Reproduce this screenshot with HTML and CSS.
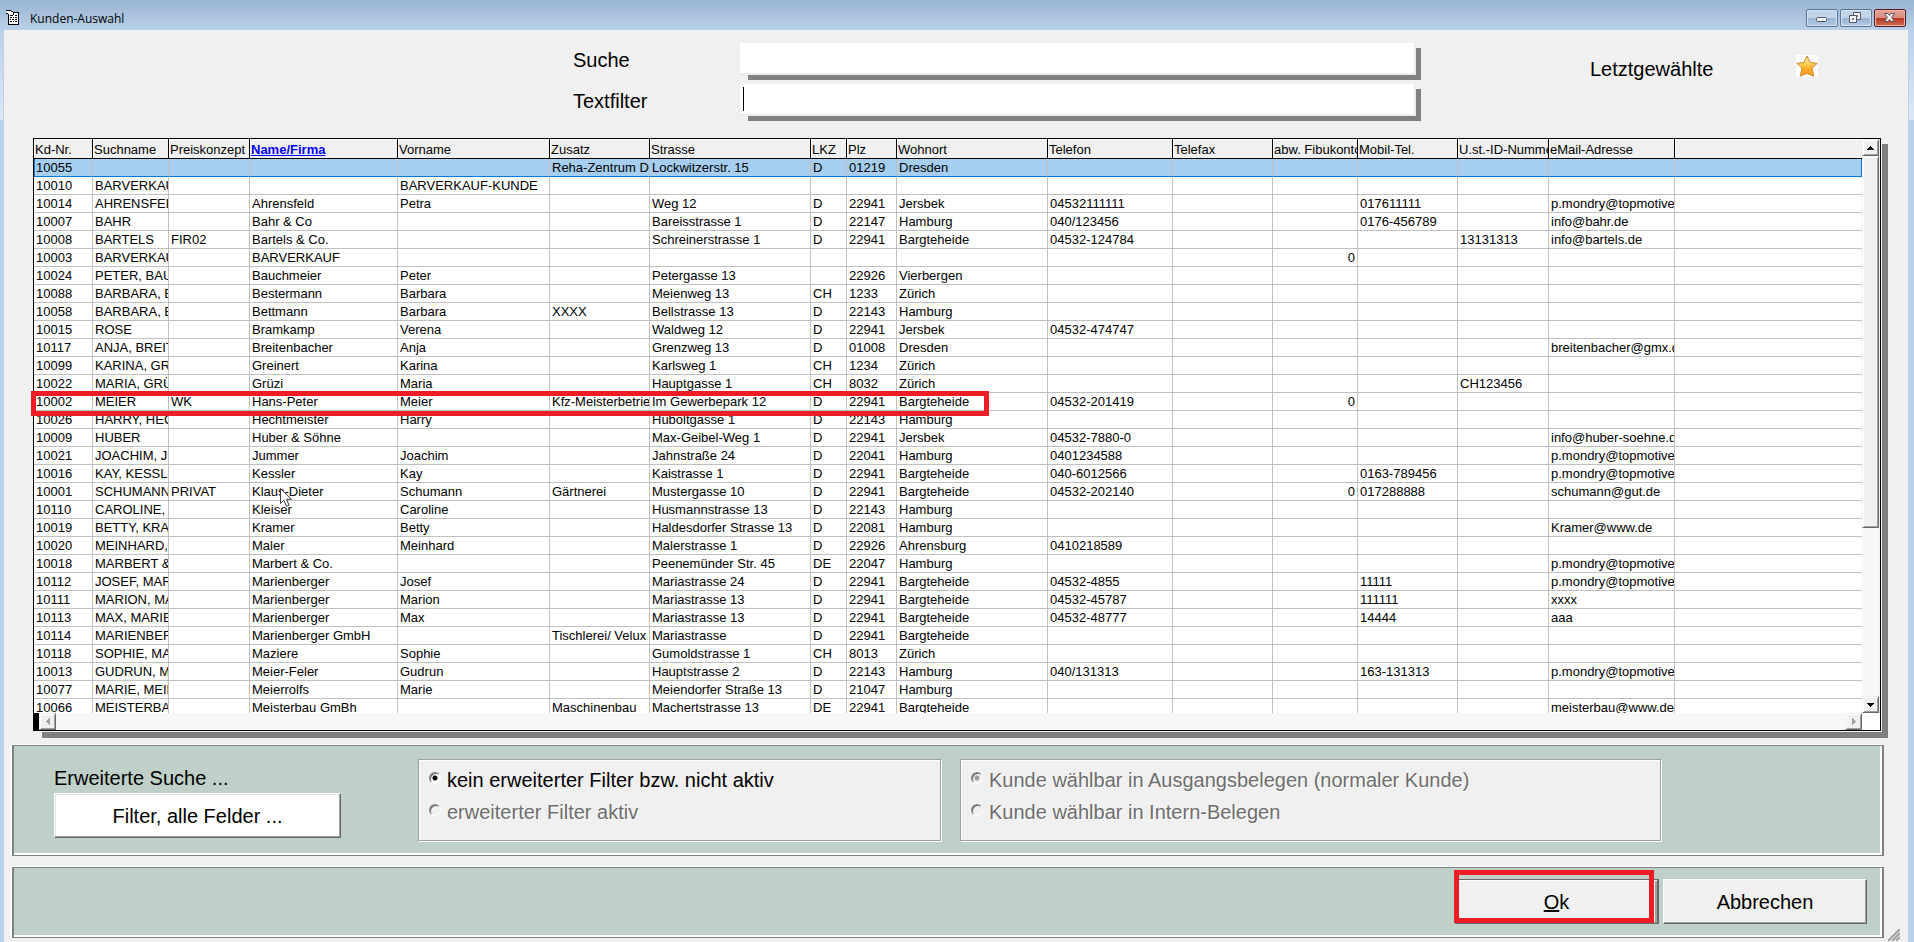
FILE: index.html
```html
<!DOCTYPE html>
<html lang="de">
<head>
<meta charset="utf-8">
<title>Kunden-Auswahl</title>
<link rel="stylesheet" href="styles.css">
</head>
<body>
<div class="window">
  <header class="titlebar">
    <svg class="app-icon" width="14" height="17" viewBox="0 0 14 17" shape-rendering="crispEdges" aria-hidden="true">
      <path d="M2 3h11v13H2z" fill="#fff"/>
      <path d="M12 3h1v13h-1zM2 15h11v1H2zM2 6h1v9H2zM8 3h5v1H8z" fill="#000"/>
      <path d="M0 1h5v1H0zM5 2h2v1H5zM7 3h1v3H7zM0 4h2v1H0zM2 5h2v1H2zM4 6h3v1H4z" fill="#000"/>
      <path d="M0 2h5v1H0zM1 3h6v1H1zM3 4h4v2H3z" fill="#fff"/>
      <path d="M9 6h2v1H9zM4 8h2v1H4zM7 8h1v1H7zM9 8h2v1H9zM4 10h1v1H4zM6 10h2v1H6zM9 10h2v1H9zM4 12h2v1H4zM7 12h1v1H7zM9 12h2v1H9z" fill="#000"/>
    </svg>
    <h1 class="title">Kunden-Auswahl</h1>
    <div class="window-buttons">
      <button class="win-btn" type="button" aria-label="Minimieren">
        <svg width="28" height="14" viewBox="0 0 28 14"><rect x="8.500" y="6.500" width="10" height="4" rx="1" fill="#f4f4f4" stroke="#535666"/></svg>
      </button>
      <button class="win-btn" type="button" aria-label="Wiederherstellen">
        <svg width="28" height="14" viewBox="0 0 28 14"><g fill="#f4f4f4" stroke="#535666"><path d="M11.500 1.500h7v7h-7z"/><path d="M14.500 4.500h1v1h-1z" fill="#8fa9c8"/><path d="M7.500 4.500h7v7h-7z"/><path d="M10.500 7.500h1v1h-1z" fill="#8fa9c8"/></g></svg>
      </button>
      <button class="win-btn win-close" type="button" aria-label="Schließen">
        <svg width="28" height="14" viewBox="0 0 28 14"><path d="M8.500 2.500h3.500l1.500 2 1.500-2h3.500l-3 4 3 4H15l-1.500-2-1.500 2H8.500l3-4z" fill="#f4f4f4" stroke="#535666"/></svg>
      </button>
    </div>
  </header>

  <main class="client">
    <form class="search">
      <label class="search-label" for="suche">Suche</label>
      <div class="field"><input class="text-input" id="suche" type="text"></div>
      <label class="search-label" for="textfilter">Textfilter</label>
      <div class="field"><input class="text-input text-input-active" id="textfilter" type="text"></div>
      <div class="recent">
        <span class="recent-label">Letztgewählte</span>
        <button class="star" type="button" aria-label="Letztgewählte anzeigen">
          <svg width="22" height="22" viewBox="0 0 22 22" aria-hidden="true">
            <defs><linearGradient id="gold" x1="0" y1="0" x2="0" y2="1"><stop offset="0" stop-color="#fff2b0"/><stop offset=".4" stop-color="#ffd056"/><stop offset=".6" stop-color="#ffb02e"/><stop offset="1" stop-color="#ff9a1e"/></linearGradient></defs>
            <path d="M11 1l3 6.500 7.300.8-5.300 5 1.800 7.900L11 18.500l-6.800 2.700L6 13.300.7 8.300 8 7.500z" fill="url(#gold)" stroke="#c9892c" stroke-linejoin="round"/>
          </svg>
        </button>
      </div>
    </form>

    <section class="grid-shadow">
      <div class="grid">
        <div class="rows">
          <table class="customers">
            <colgroup><col class="w-nr"><col class="w-such"><col class="w-preis"><col class="w-name"><col class="w-vor"><col class="w-100"><col class="w-str"><col class="w-lkz"><col class="w-plz"><col class="w-ort"><col class="w-tel"><col class="w-100"><col class="w-fibu"><col class="w-100"><col class="w-ust"><col class="w-mail"><col></colgroup>
            <thead>
              <tr><th>Kd-Nr.<th>Suchname<th>Preiskonzept<th><a class="sorted" href="#name">Name/Firma</a><th>Vorname<th>Zusatz<th>Strasse<th>LKZ<th>Plz<th>Wohnort<th>Telefon<th>Telefax<th>abw. Fibukonto<th>Mobil-Tel.<th>U.st.-ID-Nummer<th>eMail-Adresse<th></tr>
            </thead>
            <tbody>
              <tr class="selected"><td>10055<td><td><td><td><td>Reha-Zentrum De<td>Lockwitzerstr. 15<td>D<td>01219<td>Dresden<td><td><td><td><td><td><td></tr>
              <tr><td>10010<td>BARVERKAUF<td><td><td>BARVERKAUF-KUNDE<td><td><td><td><td><td><td><td><td><td><td><td></tr>
              <tr><td>10014<td>AHRENSFELD<td><td>Ahrensfeld<td>Petra<td><td>Weg 12<td>D<td>22941<td>Jersbek<td>04532111111<td><td><td>017611111<td><td>p.mondry@topmotive<td></tr>
              <tr><td>10007<td>BAHR<td><td>Bahr &amp; Co<td><td><td>Bareisstrasse 1<td>D<td>22147<td>Hamburg<td>040/123456<td><td><td>0176-456789<td><td>info@bahr.de<td></tr>
              <tr><td>10008<td>BARTELS<td>FIR02<td>Bartels &amp; Co.<td><td><td>Schreinerstrasse 1<td>D<td>22941<td>Bargteheide<td>04532-124784<td><td><td><td>13131313<td>info@bartels.de<td></tr>
              <tr><td>10003<td>BARVERKAUF<td><td>BARVERKAUF<td><td><td><td><td><td><td><td><td>0<td><td><td><td></tr>
              <tr><td>10024<td>PETER, BAUCHMEIER<td><td>Bauchmeier<td>Peter<td><td>Petergasse 13<td><td>22926<td>Vierbergen<td><td><td><td><td><td><td></tr>
              <tr><td>10088<td>BARBARA, BESTERMANN<td><td>Bestermann<td>Barbara<td><td>Meienweg 13<td>CH<td>1233<td>Zürich<td><td><td><td><td><td><td></tr>
              <tr><td>10058<td>BARBARA, BETTMANN<td><td>Bettmann<td>Barbara<td>XXXX<td>Bellstrasse 13<td>D<td>22143<td>Hamburg<td><td><td><td><td><td><td></tr>
              <tr><td>10015<td>ROSE<td><td>Bramkamp<td>Verena<td><td>Waldweg 12<td>D<td>22941<td>Jersbek<td>04532-474747<td><td><td><td><td><td></tr>
              <tr><td>10117<td>ANJA, BREITENBACHER<td><td>Breitenbacher<td>Anja<td><td>Grenzweg 13<td>D<td>01008<td>Dresden<td><td><td><td><td><td>breitenbacher@gmx.de<td></tr>
              <tr><td>10099<td>KARINA, GREINERT<td><td>Greinert<td>Karina<td><td>Karlsweg 1<td>CH<td>1234<td>Zürich<td><td><td><td><td><td><td></tr>
              <tr><td>10022<td>MARIA, GRÜZI<td><td>Grüzi<td>Maria<td><td>Hauptgasse 1<td>CH<td>8032<td>Zürich<td><td><td><td><td>CH123456<td><td></tr>
              <tr><td>10002<td>MEIER<td>WK<td>Hans-Peter<td>Meier<td>Kfz-Meisterbetrieb<td>Im Gewerbepark 12<td>D<td>22941<td>Bargteheide<td>04532-201419<td><td>0<td><td><td><td></tr>
              <tr><td>10026<td>HARRY, HECHTMEISTER<td><td>Hechtmeister<td>Harry<td><td>Huboltgasse 1<td>D<td>22143<td>Hamburg<td><td><td><td><td><td><td></tr>
              <tr><td>10009<td>HUBER<td><td>Huber &amp; Söhne<td><td><td>Max-Geibel-Weg 1<td>D<td>22941<td>Jersbek<td>04532-7880-0<td><td><td><td><td>info@huber-soehne.de<td></tr>
              <tr><td>10021<td>JOACHIM, JUMMER<td><td>Jummer<td>Joachim<td><td>Jahnstraße 24<td>D<td>22041<td>Hamburg<td>0401234588<td><td><td><td><td>p.mondry@topmotive<td></tr>
              <tr><td>10016<td>KAY, KESSLER<td><td>Kessler<td>Kay<td><td>Kaistrasse 1<td>D<td>22941<td>Bargteheide<td>040-6012566<td><td><td>0163-789456<td><td>p.mondry@topmotive<td></tr>
              <tr><td>10001<td>SCHUMANN<td>PRIVAT<td>Klaus-Dieter<td>Schumann<td>Gärtnerei<td>Mustergasse 10<td>D<td>22941<td>Bargteheide<td>04532-202140<td><td>0<td>017288888<td><td>schumann@gut.de<td></tr>
              <tr><td>10110<td>CAROLINE, KLEISER<td><td>Kleiser<td>Caroline<td><td>Husmannstrasse 13<td>D<td>22143<td>Hamburg<td><td><td><td><td><td><td></tr>
              <tr><td>10019<td>BETTY, KRAMER<td><td>Kramer<td>Betty<td><td>Haldesdorfer Strasse 13<td>D<td>22081<td>Hamburg<td><td><td><td><td><td>Kramer@www.de<td></tr>
              <tr><td>10020<td>MEINHARD, MALER<td><td>Maler<td>Meinhard<td><td>Malerstrasse 1<td>D<td>22926<td>Ahrensburg<td>0410218589<td><td><td><td><td><td></tr>
              <tr><td>10018<td>MARBERT &amp; CO.<td><td>Marbert &amp; Co.<td><td><td>Peenemünder Str. 45<td>DE<td>22047<td>Hamburg<td><td><td><td><td><td>p.mondry@topmotive<td></tr>
              <tr><td>10112<td>JOSEF, MARIENBERGER<td><td>Marienberger<td>Josef<td><td>Mariastrasse 24<td>D<td>22941<td>Bargteheide<td>04532-4855<td><td><td>11111<td><td>p.mondry@topmotive<td></tr>
              <tr><td>10111<td>MARION, MARIENBERGER<td><td>Marienberger<td>Marion<td><td>Mariastrasse 13<td>D<td>22941<td>Bargteheide<td>04532-45787<td><td><td>111111<td><td>xxxx<td></tr>
              <tr><td>10113<td>MAX, MARIENBERGER<td><td>Marienberger<td>Max<td><td>Mariastrasse 13<td>D<td>22941<td>Bargteheide<td>04532-48777<td><td><td>14444<td><td>aaa<td></tr>
              <tr><td>10114<td>MARIENBERGER<td><td>Marienberger GmbH<td><td>Tischlerei/ Velux<td>Mariastrasse<td>D<td>22941<td>Bargteheide<td><td><td><td><td><td><td></tr>
              <tr><td>10118<td>SOPHIE, MAZIERE<td><td>Maziere<td>Sophie<td><td>Gumoldstrasse 1<td>CH<td>8013<td>Zürich<td><td><td><td><td><td><td></tr>
              <tr><td>10013<td>GUDRUN, MEIER-FELER<td><td>Meier-Feler<td>Gudrun<td><td>Hauptstrasse 2<td>D<td>22143<td>Hamburg<td>040/131313<td><td><td>163-131313<td><td>p.mondry@topmotive<td></tr>
              <tr><td>10077<td>MARIE, MEIERROLFS<td><td>Meierrolfs<td>Marie<td><td>Meiendorfer Straße 13<td>D<td>21047<td>Hamburg<td><td><td><td><td><td><td></tr>
              <tr><td>10066<td>MEISTERBAU<td><td>Meisterbau GmBh<td><td>Maschinenbau<td>Machertstrasse 13<td>DE<td>22941<td>Bargteheide<td><td><td><td><td><td>meisterbau@www.de<td></tr>
            </tbody>
          </table>
        </div>
        <div class="vscroll">
          <button class="scroll-btn" type="button" aria-label="Nach oben"><svg width="8" height="4" viewBox="0 0 8 4" shape-rendering="crispEdges"><path d="M3 0h1v1h1v1h1v1h1v1H0V3h1V2h1V1h1z"/></svg></button>
          <div class="thumb"></div>
          <div class="track"></div>
          <button class="scroll-btn" type="button" aria-label="Nach unten"><svg width="8" height="4" viewBox="0 0 8 4" shape-rendering="crispEdges"><path d="M0 0h7v1H6v1H5v1H4v1H3V3H2V2H1V1H0z"/></svg></button>
        </div>
        <div class="hscroll">
          <button class="scroll-btn" type="button" aria-label="Nach links" disabled><svg width="4" height="8" viewBox="0 0 4 8" shape-rendering="crispEdges"><path d="M3 0h1v7H3V6H2V5H1V4H0V3h1V2h1V1h1z" fill="#a0a0a0"/></svg></button>
          <div class="track"></div>
          <button class="scroll-btn" type="button" aria-label="Nach rechts" disabled><svg width="4" height="8" viewBox="0 0 4 8" shape-rendering="crispEdges"><path d="M0 0h1v1h1v1h1v1h1v1H3v1H2v1H1v1H0z" fill="#a0a0a0"/></svg></button>
        </div>
        <div class="corner"></div>
        <div class="row-marker"></div>
        <svg class="cursor" width="13" height="20" viewBox="0 0 13 20" aria-hidden="true"><path d="M.5.500v15l3.400-3.200 2.600 6 2.600-1.100-2.600-5.900h4.900z" fill="#fff" stroke="#3a3a4a"/></svg>
      </div>
    </section>

    <section class="panel filter-panel">
      <div class="extended">
        <span class="extended-label">Erweiterte Suche ...</span>
        <button class="btn btn-white" type="button">Filter, alle Felder ...</button>
      </div>
      <fieldset class="options options-filter">
        <label class="option"><input class="radio" type="radio" name="filter" checked>kein erweiterter Filter bzw. nicht aktiv</label>
        <label class="option option-off"><input class="radio" type="radio" name="filter" disabled>erweiterter Filter aktiv</label>
      </fieldset>
      <fieldset class="options options-kind">
        <label class="option option-off"><input class="radio" type="radio" name="kind" checked disabled>Kunde wählbar in Ausgangsbelegen (normaler Kunde)</label>
        <label class="option option-off"><input class="radio" type="radio" name="kind" disabled>Kunde wählbar in Intern-Belegen</label>
      </fieldset>
    </section>

    <footer class="panel actions">
      <div class="marked"><button class="btn btn-default" type="button"><u>O</u>k</button></div>
      <button class="btn" type="button">Abbrechen</button>
    </footer>
    <svg class="grip" width="12" height="12" viewBox="0 0 12 12" aria-hidden="true"><path d="M0 12L12 0M4 12l8-8M8 12l4-4" stroke="#a0a0a0" stroke-width="2"/></svg>
  </main>
</div>
</body>
</html>
```

FILE: styles.css
```css
* { box-sizing: border-box; }

body {
  margin: 0;
  background: #b9d1ea;
  color: #000;
  font-family: "Liberation Sans", Arial, sans-serif;
  font-size: 20px;
  line-height: 24px;
}

button, input { font: inherit; color: inherit; margin: 0; }

.window {
  display: flex;
  flex-direction: column;
  height: 100vh;
  min-height: 600px;
  padding: 0 6px 0 4px;
  background:
    linear-gradient(#b9d1ea, #dce8f5) 0 30px / 3px 90px no-repeat,
    linear-gradient(#b9d1ea, #dce8f5) 100% 30px / 5px 90px no-repeat,
    linear-gradient(#99b4d1, #b9d1ea) 0 0 / 100% 30px no-repeat,
    #b9d1ea;
}

/* Title bar */
.titlebar {
  display: flex;
  flex: none;
  align-items: flex-start;
  height: 30px;
  padding: 9px 2px 0;
}
.app-icon { flex: none; }
.title {
  flex: 1;
  margin: 1px 0 0 10px;
  font: 12px/18px "Open Sans", "Noto Sans", sans-serif;
}
.window-buttons { display: flex; gap: 2px; }
.win-btn {
  width: 32px;
  height: 18px;
  padding: 1px;
  border: 1px solid #5d7596;
  border-radius: 2px;
  background: linear-gradient(#c3d4e8 50%, #98b3d3 50%, #b4cbe5);
  box-shadow: inset 0 0 0 1px #d5e2f1;
}
.win-btn svg { display: block; }
.win-close {
  border-color: #5a1a25;
  background: linear-gradient(#e6a497, #d98b7c 50%, #b8371f 50%, #d06a50);
  box-shadow: inset 0 0 0 1px #e9b5ab;
}

.client {
  position: relative;
  display: flex;
  flex: 1;
  flex-direction: column;
  min-height: 0;
  background: #f0f0f0;
}

/* Search area */
.search {
  display: grid;
  flex: none;
  grid-template-columns: 569px 167px 1fr 487px;
  row-gap: 4px;
  padding: 13px 0 17px;
}
.search-label { grid-column: 2; padding-top: 5px; }
.field {
  grid-column: 3;
  padding: 0 5px 5px 0;
  background: linear-gradient(#808080, #808080) 8px 5px no-repeat;
}
.text-input {
  display: block;
  width: 100%;
  height: 32px;
  padding: 0 4px;
  border: solid #ececec;
  border-width: 0 2px 2px 0;
  border-radius: 0;
  background: #fff;
  outline: 0;
}
.text-input-active { background: linear-gradient(#000, #000) 3px 3px / 1px 24px no-repeat #fff; }
.recent {
  display: flex;
  grid-row: 1 / 3;
  grid-column: 4;
  gap: 83px;
  padding: 12px 0 0 169px;
}
.recent-label { padding-top: 2px; }
.star {
  width: 22px;
  height: 22px;
  padding: 0;
  border: 0;
  background: #fff;
}
.star svg { display: block; }

/* Customer grid */
.grid-shadow {
  flex: 1;
  min-height: 0;
  margin: 0 20px 0 29px;
  padding: 0 7px 7px 0;
  background: linear-gradient(#808080, #808080) 9px 6px no-repeat;
}
.grid {
  position: relative;
  display: grid;
  grid-template: minmax(0, 1fr) 17px / minmax(0, 1fr) 18px;
  height: 100%;
  border: 1px solid #000;
  outline: 1px solid #f0f0f0;
  background: #fff;
}
.rows { overflow: hidden; }
.customers {
  width: 100%;
  border-collapse: separate;
  border-spacing: 0;
  table-layout: fixed;
  font-size: 13px;
  line-height: 17px;
}
.customers th, .customers td {
  overflow: hidden;
  border: solid #c0c0c0;
  border-width: 0 1px 1px 0;
  white-space: nowrap;
  text-overflow: clip;
}
.customers th {
  padding: 2px 0 0 1px;
  border-color: #000;
  background: #f0f0f0;
  box-shadow: inset 1px 1px #fff;
  font-weight: normal;
  text-align: left;
}
.customers td { padding: 0 2px; }
.customers td:nth-child(13) { text-align: right; }
.customers th:last-child, .customers td:last-child { border-right: 0; }
.customers .selected td { border-bottom-color: #0078d7; background: #a5cef0; }
.customers .selected td:first-child { box-shadow: inset 1px 0 #0078d7; }
.customers .selected td:last-child { box-shadow: inset -1px 0 #0078d7; }
.sorted { color: #00f; font-weight: bold; }

.w-nr { width: 59px; }
.w-such { width: 76px; }
.w-preis { width: 81px; }
.w-name { width: 148px; }
.w-vor { width: 152px; }
.w-100 { width: 100px; }
.w-str { width: 161px; }
.w-lkz { width: 36px; }
.w-plz { width: 50px; }
.w-ort { width: 151px; }
.w-tel { width: 125px; }
.w-fibu { width: 85px; }
.w-ust { width: 91px; }
.w-mail { width: 126px; }

.vscroll {
  display: flex;
  flex-direction: column;
  border-right: 1px solid #f0f0f0;
}
.hscroll {
  display: flex;
  border-left: 5px solid #000;
}
.scroll-btn, .thumb {
  border: 1px solid;
  border-color: #f0f0f0 #696969 #696969 #f0f0f0;
  border-radius: 0;
  background: #f0f0f0;
  box-shadow: inset 1px 1px #fff, inset -1px -1px #a0a0a0;
}
.scroll-btn {
  display: flex;
  flex: none;
  align-items: center;
  justify-content: center;
  width: 17px;
  height: 17px;
  padding: 0;
}
.thumb { flex: 371; }
.track {
  flex: 168;
  background: repeating-conic-gradient(#fff 0 25%, #f0f0f0 0 50%) 0 0 / 2px 2px;
}
.row-marker {
  position: absolute;
  top: 252px;
  left: -3px;
  width: 958px;
  height: 25px;
  border: 5px solid #ee1c24;
  pointer-events: none;
}
.cursor {
  position: absolute;
  top: 349px;
  left: 246px;
  pointer-events: none;
}

/* Lower panels */
.panel {
  flex: none;
  margin: 7px 24px 0 8px;
  border: solid #808080;
  border-width: 1px 2px;
  background: #bfd0c8;
  box-shadow: -2px -1px #fff, inset -2px -2px #fff;
}
.filter-panel {
  display: flex;
  align-items: flex-start;
  padding: 13px 220px 14px 40px;
}
.extended {
  display: flex;
  flex: none;
  flex-direction: column;
  width: 287px;
  margin-right: 77px;
  padding-top: 7px;
  gap: 3px;
}
.btn {
  width: 204px;
  height: 45px;
  padding: 0;
  border: 1px solid;
  border-color: #fff #696969 #696969 #fff;
  border-radius: 0;
  background: #f0f0f0;
  box-shadow: inset -1px -1px #a0a0a0;
}
.btn-white {
  width: 100%;
  background: #fff;
  box-shadow: inset -1px -1px #a0a0a0, inset 1px 1px #e3e3e3;
}
.btn-default {
  border: 1px solid #696969;
  border-right-width: 2px;
  box-shadow: inset 1px 1px #fff, inset -2px -1px #a0a0a0;
}

.options {
  display: flex;
  flex-direction: column;
  min-width: 0;
  height: 82px;
  margin: 0;
  padding: 8px 10px;
  gap: 8px;
  border: 1px solid #a0a0a0;
  background: #f0f0f0;
  box-shadow: 1px 1px #fff, inset 1px 1px #fff;
}
.options-filter { flex: 0 1 523px; margin-right: 19px; }
.options-kind { flex: 0 1 701px; }
.option {
  display: flex;
  align-items: center;
  gap: 6px;
  white-space: nowrap;
}
.option-off { color: #6d6d6d; text-shadow: 1px 1px #fff; }
.radio {
  flex: none;
  width: 12px;
  height: 12px;
  margin-bottom: 4px;
  border: 1px solid;
  border-color: #808080 #fff #fff #808080;
  border-radius: 50%;
  appearance: none;
  background: #fff;
  box-shadow: inset 1px 1px #696969;
}
.radio:disabled { background: #f0f0f0; }
.radio:checked { background: radial-gradient(circle, #000 2px, #fff 3px); }
.radio:checked:disabled { background: radial-gradient(circle, #a0a0a0 2px, #f0f0f0 3px); }

.actions {
  display: flex;
  justify-content: flex-end;
  gap: 4px;
  margin: 11px 24px 4px 8px;
  padding: 11px 15px 13px;
}
.marked { position: relative; }
.marked::after {
  content: "";
  position: absolute;
  inset: -9px 5px 1px -1px;
  border: 5px solid #ee1c24;
  pointer-events: none;
}
.grip {
  position: absolute;
  right: 8px;
  bottom: 1px;
}
```
